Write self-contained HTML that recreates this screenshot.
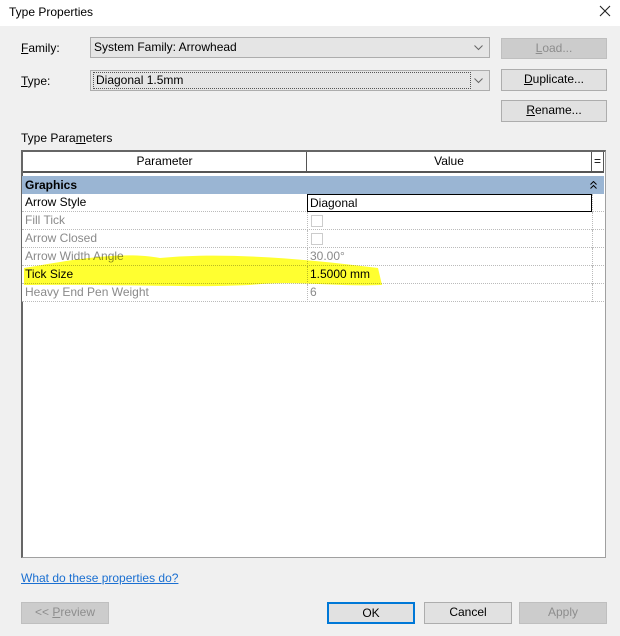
<!DOCTYPE html>
<html><head><style>
*{box-sizing:border-box;margin:0;padding:0}
body{width:620px;height:636px;background:#f0f0f0;font-family:"Liberation Sans",sans-serif;font-size:12px;color:#000;position:relative;overflow:hidden}
.a{position:absolute}
.title{left:0;top:0;width:620px;height:26px;background:#fff}
.btn{position:absolute;background:#e1e1e1;border:1px solid #adadad;text-align:center;line-height:19px;font-size:12px}
.dis{background:#cccccc;border-color:#bfbfbf;color:#8d8d8d}
.combo{position:absolute;background:#e5e5e5;border:1px solid #adadad;height:21px;padding-left:3px;line-height:19px}
.combo svg{position:absolute;right:6px;top:7px}
.row{position:absolute;left:22px;width:582px;height:18px;border-bottom:1px dotted #bbb;line-height:17px;background:#fff}
.row .p{position:absolute;left:3px}
.row .v{position:absolute;left:285px;top:0;height:18px;border-left:1px dotted #bbb;padding-left:2px;width:285px}
.row .e{position:absolute;left:570px;top:0;height:18px;border-left:1px dotted #bbb;width:12px}
.g{color:#8a8a8a}
.cb{position:absolute;left:3px;top:3px;width:12px;height:12px;border:1px solid #ccc;background:#fff}
</style></head><body>
<div class="a title"></div>
<div class="a" style="left:9px;top:5px;font-size:12px">Type Properties</div>
<svg class="a" style="left:599px;top:5px" width="12" height="12"><path d="M1 1L11 11M11 1L1 11" stroke="#222" stroke-width="1.1"/></svg>

<div class="a" style="left:21px;top:41px"><u>F</u>amily:</div>
<div class="combo" style="left:90px;top:37px;width:400px">System Family: Arrowhead<svg width="9" height="6"><path d="M0.5 0.5L4.5 4.5L8.5 0.5" fill="none" stroke="#666"/></svg></div>
<div class="btn dis" style="left:501px;top:38px;width:106px;height:21px"><u>L</u>oad...</div>

<div class="a" style="left:21px;top:74px"><u>T</u>ype:</div>
<div class="combo" style="left:90px;top:70px;width:400px"><span style="outline:1px dotted #555;padding:0 2px;display:inline-block;width:376px;height:15px;line-height:14px;margin-top:1px">Diagonal 1.5mm</span><svg width="9" height="6"><path d="M0.5 0.5L4.5 4.5L8.5 0.5" fill="none" stroke="#666"/></svg></div>
<div class="btn" style="left:501px;top:69px;width:106px;height:22px"><u>D</u>uplicate...</div>
<div class="btn" style="left:501px;top:100px;width:106px;height:22px"><u>R</u>ename...</div>

<div class="a" style="left:21px;top:131px">Type Para<u>m</u>eters</div>

<div class="a" style="left:21px;top:150px;width:585px;height:408px;background:#fff;border:1px solid #a0a0a0;border-top:2px solid #666;border-left:2px solid #666"></div>
<div class="a" style="left:23px;top:152px;width:284px;height:21px;border-right:1px solid #555;border-bottom:2px solid #555;text-align:center;line-height:19px">Parameter</div>
<div class="a" style="left:307px;top:152px;width:285px;height:21px;border-right:1px solid #555;border-bottom:2px solid #555;text-align:center;line-height:19px">Value</div>
<div class="a" style="left:592px;top:152px;width:12px;height:21px;border-right:1px solid #555;border-bottom:2px solid #555;text-align:center;line-height:19px">=</div>
<div class="a" style="left:22px;top:176px;width:582px;height:18px;background:#9ab5d3;font-weight:bold;line-height:18px;padding-left:3px">Graphics<svg style="position:absolute;right:7px;top:5px" width="7" height="8"><path d="M0.5 3.5L3.5 0.5L6.5 3.5M0.5 7.5L3.5 4.5L6.5 7.5" fill="none" stroke="#000"/></svg></div>

<div class="row" style="top:194px"><span class="p">Arrow Style</span><div class="v" style="border:1px solid #000;height:18px;width:285px">Diagonal</div><div class="e"></div></div>
<div class="row" style="top:212px"><span class="p g">Fill Tick</span><div class="v"><div class="cb"></div></div><div class="e"></div></div>
<div class="row" style="top:230px"><span class="p g">Arrow Closed</span><div class="v"><div class="cb"></div></div><div class="e"></div></div>
<div class="row" style="top:248px"><span class="p g">Arrow Width Angle</span><div class="v g">30.00°</div><div class="e"></div></div>
<div class="row" style="top:266px"><span class="p">Tick Size</span><div class="v">1.5000 mm</div><div class="e"></div></div>
<div class="row" style="top:284px"><span class="p g">Heavy End Pen Weight</span><div class="v g">6</div><div class="e"></div></div>

<svg class="a" style="left:0;top:0;mix-blend-mode:multiply" width="620" height="636">
<path d="M24 268 C60 262 120 250 160 258 C220 252 300 258 378 268 L382 285 C330 287 300 280 250 285 C190 288 120 284 24 285 Z" fill="#ffff30"/>
</svg>

<div class="a" style="left:21px;top:571px;color:#1a6fd1;text-decoration:underline">What do these properties do?</div>
<div class="btn dis" style="left:21px;top:602px;width:88px;height:22px">&lt;&lt; <u>P</u>review</div>
<div class="btn" style="left:327px;top:602px;width:88px;height:22px;border:2px solid #0078d7;line-height:18px">OK</div>
<div class="btn" style="left:424px;top:602px;width:88px;height:22px">Cancel</div>
<div class="btn dis" style="left:519px;top:602px;width:88px;height:22px">Apply</div>
</body></html>
